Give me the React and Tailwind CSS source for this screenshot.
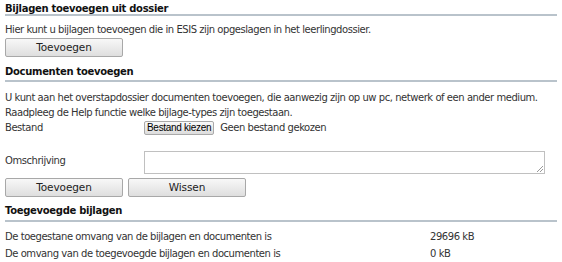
export default function App() {
  const font = { fontFamily: '"DejaVu Sans", Verdana, sans-serif' };
  const head = "w-[552px] border-b-2 border-[#b9c3cb] leading-[14px] text-[10px] tracking-[-0.3px] font-bold text-[#111]";
  return (
    <div className="w-[562px] h-[262px] bg-white text-[#333] text-[10px] tracking-[-0.45px] leading-[15px] px-[5px] overflow-hidden" style={font}>
      <div className={`${head} h-[16px] pt-[2px]`}>Bijlagen toevoegen uit dossier</div>
      <div className="h-[22px] pt-[6px]">
        Hier kunt u bijlagen toevoegen die in ESIS zijn opgeslagen in het leerlingdossier.
      </div>
      <Btn>Toevoegen</Btn>
      <div className={`${head} h-[25px] pt-[8px]`}>Documenten toevoegen</div>
      <div className="mt-[8px]">
        U kunt aan het overstapdossier documenten toevoegen, die aanwezig zijn op uw pc, netwerk of een ander medium.
      </div>
      <div>Raadpleeg de Help functie welke bijlage-types zijn toegestaan.</div>
      <div className="flex items-center h-[15px]">
        <div className="w-[139px]">Bestand</div>
        <button
          className="h-[14px] px-[2px] border border-[#a9a9a9] rounded-[2px] bg-gradient-to-b from-[#fafafa] to-[#dcdcdc] text-[10px] tracking-[-0.3px] text-black leading-none"
          style={{ fontFamily: '"Liberation Sans", Arial, sans-serif' }}
        >
          Bestand kiezen
        </button>
        <span className="ml-[6px]">Geen bestand gekozen</span>
      </div>
      <div className="flex items-start mt-[16px]">
        <div className="w-[139px] pt-[2px]">Omschrijving</div>
        <div className="relative w-[401px] h-[23px] border border-[#c0c0c0] bg-white">
          <svg className="absolute right-[1px] bottom-[1px]" width="6" height="6" viewBox="0 0 6 6">
            <path d="M6 0 L0 6 M6 3 L3 6" stroke="#999" strokeWidth="1" />
          </svg>
        </div>
      </div>
      <div className="flex gap-[5px] mt-[4px]">
        <Btn>Toevoegen</Btn>
        <Btn>Wissen</Btn>
      </div>
      <div className={`${head} h-[25px] pt-[7px]`}>Toegevoegde bijlagen</div>
      <div className="flex h-[17px] items-center mt-[6px]">
        <div className="w-[425px]">De toegestane omvang van de bijlagen en documenten is</div>
        <div>29696 kB</div>
      </div>
      <div className="flex h-[17px] items-center">
        <div className="w-[425px]">De omvang van de toegevoegde bijlagen en documenten is</div>
        <div>0 kB</div>
      </div>
    </div>
  );
}

function Btn({ children }) {
  return (
    <button className="block w-[118px] h-[19px] border border-[#a8a8a8] rounded-[2px] bg-gradient-to-b from-[#f8f8f8] to-[#dedede] text-[10.5px] tracking-[-0.1px] text-[#222] leading-none">
      {children}
    </button>
  );
}
